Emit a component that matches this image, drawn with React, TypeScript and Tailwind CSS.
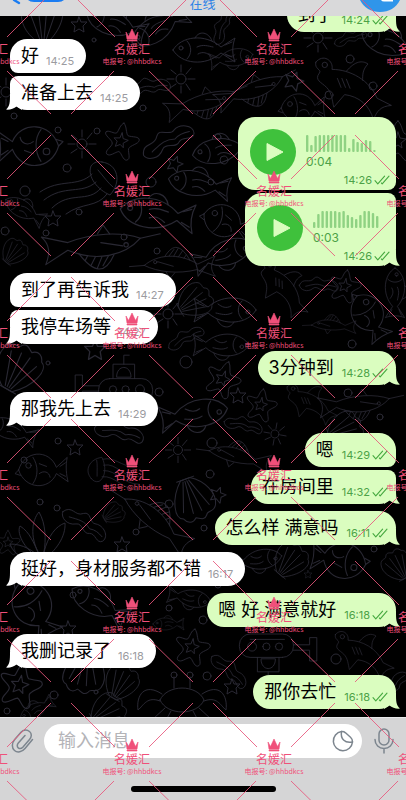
import React from 'react';
import clsx from 'clsx';

interface Message {
  id: number;
  out?: boolean;
  text?: string;
  time: string;
  duration?: string;
  bars?: number[];
  // joined: sits right under the previous bubble of the same sender
  joined?: boolean;
  tail?: boolean;
}

const messages: Message[] = [
  { id: 1, out: true, text: '到了', time: '14:24', tail: true },
  { id: 2, text: '好', time: '14:25' },
  { id: 3, text: '准备上去', time: '14:25', joined: true, tail: true },
  {
    id: 4,
    out: true,
    time: '14:26',
    duration: '0:04',
    bars: [17, 7, 16, 17, 17, 17, 17, 17, 17, 17, 4, 13, 10, 9, 12, 11, 2],
  },
  {
    id: 5,
    out: true,
    time: '14:26',
    duration: '0:03',
    bars: [6, 14, 17, 17, 17, 17, 16, 17, 13, 11, 9, 13, 17, 17, 15, 12],
    joined: true,
    tail: true,
  },
  { id: 6, text: '到了再告诉我', time: '14:27' },
  { id: 7, text: '我停车场等', time: '14:27', joined: true, tail: true },
  { id: 8, out: true, text: '3分钟到', time: '14:28', tail: true },
  { id: 9, text: '那我先上去', time: '14:29', tail: true },
  { id: 10, out: true, text: '嗯', time: '14:29' },
  { id: 11, out: true, text: '在房间里', time: '14:32', joined: true, tail: true },
  { id: 12, out: true, text: '怎么样 满意吗', time: '16:11', tail: true },
  { id: 13, text: '挺好，身材服务都不错', time: '16:17', tail: true },
  { id: 14, out: true, text: '嗯 好 满意就好', time: '16:18', tail: true },
  { id: 15, text: '我删记录了', time: '16:18', tail: true },
  { id: 16, out: true, text: '那你去忙', time: '16:18', tail: true },
];

const Checks = () => (
  <svg viewBox="0 0 16 10" className="h-[10px] w-4" fill="none" stroke="#45a83f" strokeWidth="1.1" strokeLinecap="round" strokeLinejoin="round">
    <path d="M1 5.6 3.8 8.8 10.6 1.2" />
    <path d="M7.4 8 8.2 8.8 15 1.2" />
  </svg>
);

const Tail = ({ out }: { out?: boolean }) => (
  <svg
    viewBox="0 0 16 16"
    className={clsx('absolute bottom-0 h-4 w-4', out ? '-right-1 -scale-x-100 text-[#dafdbf]' : '-left-1 text-white')}
    fill="currentColor"
  >
    <path d="M4 0C4 8 4 12 0 15.6 4 16 8 14.6 10.500 12.500L16 16V0Z" />
  </svg>
);

const Stamp = ({ message }: { message: Message }) => (
  <span className={clsx('flex items-center gap-[2px] text-[11px] leading-3', message.out ? 'text-[#4ca247]' : 'text-[#9b9ba0]')}>
    <time>{message.time}</time>
    {message.out && <Checks />}
  </span>
);

const Waveform = ({ bars }: { bars: number[] }) => (
  <svg width={bars.length * 4.2} height="17" fill="#8fd283">
    {bars.map((h, i) => (
      <rect key={i} x={i * 4.2} y={17 - h} width="2.4" height={h} rx="1" />
    ))}
  </svg>
);

const Voice = ({ message }: { message: Message }) => (
  <div className={clsx('relative flex h-[73px] gap-[10px] pt-3 pr-[6px] pl-3', message.joined ? 'w-[151px]' : 'w-[158px]')}>
    <button aria-label="播放" className="flex size-[46px] shrink-0 items-center justify-center rounded-full bg-[#3fc13c]">
      <svg viewBox="0 0 18 20" className="ml-1 h-5 w-[18px]" fill="#dafdbf">
        <path d="M1 1.500 17 10 1 18.500Z" stroke="#dafdbf" strokeLinejoin="round" />
      </svg>
    </button>
    <div className="flex flex-1 flex-col pt-[6px]">
      <Waveform bars={message.bars ?? []} />
      <span className="mt-1 text-xs leading-3 text-[#4ca247]">{message.duration}</span>
      <div className="mt-[6px] self-end">
        <Stamp message={message} />
      </div>
    </div>
  </div>
);

const Bubble = ({ message }: { message: Message }) => {
  const { out, joined, tail } = message;
  return (
    <li className={clsx('flex', out ? 'justify-end' : 'justify-start', joined ? 'mt-[3px]' : 'mt-[7px]')}>
      <div
        className={clsx(
          'relative rounded-[17px]',
          out ? 'bg-[#dafdbf]' : 'bg-white',
          joined && (out ? 'rounded-tr-lg' : 'rounded-tl-lg'),
          !tail && (out ? 'rounded-br-lg' : 'rounded-bl-lg'),
        )}
      >
        {tail && <Tail out={out} />}
        {message.bars ? (
          <Voice message={message} />
        ) : (
          <div className={clsx('relative flex items-end pl-[11px]', out ? 'gap-2 pr-2' : 'gap-[7px] pr-3')}>
            <p className="text-lg leading-[34px] text-black">{message.text}</p>
            <div className="pb-[6px]">
              <Stamp message={message} />
            </div>
          </div>
        )}
      </div>
    </li>
  );
};

/* Sea creatures used on the wallpaper, each drawn around its own centre */
const shapes: Record<string, React.ReactNode> = {
  fish: (
    <>
      <path d="M-30 0C-22-14 2-17 18-3L32-12C29-4 29 4 32 12L18 3C2 17-22 14-30 0Z" />
      <path d="M-16-9C-11-4-11 4-16 9M-8-12C-4-20 6-18 9-9M-5 4C0 1 4 3 8 6M-6-3C0-6 5-4 10-3M22-5 29-8M22 4 29 7" />
      <circle cx="-22" cy="-2" r="2" />
    </>
  ),
  round: (
    <>
      <path d="M-26 0C-20-22 8-24 16-3L28-14C26-5 27 6 29 13L16 4C8 23-19 22-26 0Z" />
      <path d="M-10-14C-4-5-4 7-10 15M-3 4C2 0 8 2 9 8M-3-7 5-4M20-4 26-8M20 4 26 7M-26 0-30 4-24 6" />
      <circle cx="-15" cy="-5" r="3" />
    </>
  ),
  long: (
    <>
      <path d="M-44 8C-30-8-4-14 22-3L42-16C38-6 38 2 46 9L22 4C0 13-26 14-44 8Z" />
      <path d="M-44 8-62 12M-20-7C-12-25-2-24 12-6M-15-8-10-17M-9-9-5-19M-3-9 1-17M4-8 6-12M-16 12-10 20-5 12M-28 1-8 4" />
      <circle cx="-31" cy="2" r="2" />
    </>
  ),
  star: (
    <>
      <path d="M0-19C4-16 4-8 7-6C11-5 20-8 20-3C20 1 11 4 10 8C10 13 15 19 10 21C6 22 3 14 0 13C-4 14-9 21-13 18C-16 14-8 9-9 5C-10 1-20-2-18-6C-16-9-8-5-6-7C-4-10-4-17 0-19Z" />
      <path d="M0-8 2-2 8-1 3 3 4 8 0 5-5 8-4 2-8-1-2-2Z" />
    </>
  ),
  mini: <path d="M0-7 2-2 8-2 4 2 5 8 0 5-5 8-4 2-8-2-2-2Z" />,
  sun: (
    <>
      <circle r="5" />
      <path d="M0-7V-14M0 7V14M7 0H14M-7 0H-14M5-5 10-11M-5-5-10-9M5 5 9 11M-5 5-11 9" />
    </>
  ),
  weed: <path d="M-22 20C-28 8-14 8-16-2C-17-12-4-6-2-14C1-22 14-26 18-18C20-10 8-12 7-5C7 3-6 0-6 8C-6 18-16 24-22 20ZM-15 14C-10 4-8-2 2-6C4-12 8-15 13-18" />,
  shell: (
    <>
      <path d="M-5 20C-18 12-25-4-20-14C-16-22-10-16-8-21C-4-26 0-21 3-20C8-25 13-22 15-17C24-14 20 6 5 20Z" />
      <path d="M-3 18-14-12M-1 18-5-15M1 18 4-15M3 18 13-11M-9 20H9" />
    </>
  ),
  jelly: (
    <>
      <path d="M18-20C34-18 38 0 26 13C14 8 3-5 7-16C10-20 14-21 18-20Z" />
      <path d="M8-8C-6 6-24-4-44 10M12 0C-2 13-20 2-40 18M17 6C4 22-14 8-32 26M23 12C13 26-2 20-18 32M14-12C20-5 24 1 29 5" />
    </>
  ),
  crab: (
    <>
      <path d="M-22 4C-15-12 15-12 22 4C15 20-15 20-22 4ZM-20-2C-38-14-46 0-44 14C-38 9-35 0-22 5M20-2C38-14 46 0 44 14C38 9 35 0 22 5M-8-8V-19M8-8V-19M-17 12-29 23M-11 15-18 28M17 12 29 23M11 15 18 28" />
      <circle cx="-8" cy="-21" r="3" />
      <circle cx="8" cy="-21" r="3" />
    </>
  ),
  plant: <path d="M0 24C-16 16-26-2-22-10C-12-4-8 8-4 16C-12 0-10-16-3-24C4-12 4 4 2 16C6 0 14-10 23-13C24 0 14 16 0 24ZM0 24C-14 26-28 20-32 8C-20 8-8 14 0 24" />,
  shark: (
    <>
      <path d="M-38-22C-30-32-18-24-20-14C0-14 22-2 30 18L46 26C34 27 30 32 26 42C22 26 10 16-6 14L-18 28C-20 20-20 12-26 6C-32 0-40-2-34-10C-31-14-40-14-38-22ZM-4-12C6-24 14-24 20-20C14-14 14-8 14-2" />
      <path d="M-14-4-10 6M-9-4-5 6M-4-3 0 7" />
      <circle cx="-28" cy="-19" r="3" />
    </>
  ),
  sub: (
    <>
      <rect x="-26" y="-6" width="60" height="26" rx="12" />
      <path d="M-26 2H-44V-10H-52V16H-44V8H-26M-10-6V-22H14V-6M2-22V-32H8M-6-8C-6-22 10-22 10-8ZM-16 14H22" />
      <circle cx="-10" cy="6" r="4" />
      <circle cx="4" cy="6" r="4" />
      <circle cx="20" cy="6" r="5" />
    </>
  ),
};

const doodles: [string, number, number, number?, number?][] = [
  ['shell', 43, 22], ['mini', 79, 24], ['fish', 115, 24, 20], ['fish', 158, 28, -30], ['fish', 203, 50], ['sun', 181, 79],
  ['long', 200, 104, 170, 0.8], ['sun', 6, 92], ['mini', 116, 92, 10], ['weed', 150, 90, 40, 0.8], ['weed', 226, 26, -20, 0.7],
  ['fish', 232, 58, 170, 0.7], ['long', 250, 92, 165, 0.8], ['sun', 318, 38], ['weed', 352, 40, 30, 0.6], ['fish', 390, 44, 20],
  ['shark', 350, 82, 0, 0.9], ['mini', 294, 80, 20, 1.2], ['round', 302, 108, 0, 0.8], ['round', 30, 146, 180, 1.1],
  ['sun', 82, 144], ['star', 121, 140, 10, 0.9], ['weed', 171, 144, 20], ['jelly', 84, 182], ['mini', 175, 163, 20],
  ['fish', 198, 184, 10], ['long', 92, 247, 180, 1.1], ['fish', 156, 214, 8, 1.2], ['mini', 53, 218], ['shell', 14, 253, 40, 0.6],
  ['fish', 24, 210, 30, 0.7], ['fish', 222, 150, -10], ['round', 226, 222, 20, 0.9], ['fish', 224, 254, 160], ['star', 398, 140],
  ['shell', 18, 370, 30, 1.1], ['long', 180, 264, 8, 0.8], ['sub', 122, 384, 0, 0.9], ['mini', 95, 349, 0, 1.3],
  ['sun', 168, 314], ['shell', 194, 302, 60, 0.8], ['weed', 188, 340, 20, 0.7], ['fish', 226, 310, 180], ['fish', 222, 345, 180, 0.9],
  ['shark', 284, 284, 20, 0.7], ['weed', 320, 288, 50, 0.7], ['star', 345, 285, 10, 0.8], ['long', 334, 325, 10, 0.5],
  ['round', 369, 316, 60, 0.9], ['fish', 395, 292, 90, 0.8], ['star', 223, 378, 20, 0.9], ['mini', 238, 395], ['star', 261, 404, 10, 0.8],
  ['shark', 310, 400, 0, 0.6], ['long', 354, 405, 180, 0.8], ['sun', 275, 434, 10, 0.8], ['weed', 244, 428, 60, 0.7],
  ['fish', 195, 414, 170, 1.1], ['long', 240, 456, 20, 0.7], ['shell', 344, 430, 70, 0.8],
  ['round', 42, 470, 0, 0.9], ['mini', 75, 447], ['fish', 12, 430, 20, 0.8], ['weed', 120, 436, 60, 0.9], ['jelly', 110, 476, 220, 0.7],
  ['shell', 192, 498, 160, 1], ['long', 158, 522, 45, 0.9], ['sun', 178, 450, 0, 0.9],
  ['plant', 42, 536], ['weed', 84, 528, 80, 0.9], ['shell', 113, 514, 60, 0.5], ['mini', 122, 544],
  ['mini', 218, 494, 20], ['round', 340, 560, 190, 1], ['fish', 258, 560, 170, 0.8],
  ['shell', 290, 562, 40, 0.8], ['mini', 308, 574, 0, 0.5], ['shell', 398, 566, -30, 0.7], ['star', 8, 542, 0, 0.6],
  ['round', 34, 608, 60, 1.1], ['fish', 98, 604, 30], ['mini', 68, 628], ['fish', 168, 624, 0, 0.5], ['star', 192, 646, 10, 0.9],
  ['fish', 190, 598, 190, 0.7], ['sub', 270, 652, 180, 0.9], ['star', 20, 684, 10, 1.1], ['shell', 84, 670, 190],
  ['shell', 121, 684, 30, 0.8], ['crab', 182, 696], ['weed', 228, 674, 90, 0.8], ['mini', 232, 686], ['shark', 362, 650, 0, 0.7],
  ['shell', 107, 712, 60, 0.8], ['fish', 36, 710, -30, 0.6], ['weed', 394, 690, 0, 0.8],
];

const bubbles: [number, number, number][] = [
  [94, 40, 2], [143, 108, 3], [350, 59, 4], [373, 86, 4], [329, 95, 4], [58, 130, 3], [97, 131, 3], [67, 168, 4], [25, 191, 5],
  [5, 231, 4], [46, 233, 3], [79, 212, 3], [124, 237, 3], [157, 251, 3], [151, 182, 5], [218, 137, 3], [224, 160, 4], [211, 182, 3],
  [186, 362, 6], [48, 363, 2], [159, 392, 4], [212, 443, 5], [352, 344, 4], [380, 417, 3], [348, 393, 4], [58, 441, 3], [24, 460, 3],
  [40, 502, 3], [57, 508, 3], [210, 474, 4], [169, 504, 4], [136, 532, 3], [204, 528, 3], [218, 585, 3], [374, 549, 3], [73, 595, 3],
  [54, 695, 4], [96, 692, 2], [7, 711, 3], [207, 676, 4], [336, 659, 5], [169, 608, 3], [203, 620, 4], [240, 612, 4], [14, 116, 3],
];

const Wallpaper = () => (
  <svg aria-hidden="true" className="absolute inset-0 h-full w-full">
    <defs>
      <pattern id="sea" x="0" y="-16" width="406" height="720" patternUnits="userSpaceOnUse">
        <g fill="none" stroke="#292833" strokeWidth="1" strokeLinecap="round" strokeLinejoin="round">
          {doodles.map(([name, x, y, turn = 0, size = 1], i) => (
            <g key={i} transform={`translate(${x} ${y}) rotate(${turn}) scale(${size})`}>
              {shapes[name]}
            </g>
          ))}
          {bubbles.map(([x, y, r], i) => (
            <circle key={i} cx={x} cy={y} r={r} />
          ))}
        </g>
      </pattern>
    </defs>
    <rect width="100%" height="100%" fill="url(#sea)" />
  </svg>
);

const STEP = 142;

const Watermark = () => (
  <svg className="pointer-events-none absolute inset-0 z-20 h-full w-full font-['Noto_Sans_CJK_SC',sans-serif]">
    {[0, 1, 2, 3, 4, 5].map((row) =>
      [0, 1, 2, 3].map((col) => (
        <g key={`${row}-${col}`} transform={`translate(${col * STEP - 10} ${row * STEP + 54})`}>
          <path d="M-17-17-61-61M17-17 61-61M-18 17-61 60M17 17 61 60" stroke="#e8567b" strokeOpacity="0.85" />
          <path d="M-6-22-3.500-17.500 0-25 3.500-17.500 6-22 5-14.800H-5ZM-5-14H5V-13H-5Z" fill="#f0507a" stroke="#f0507a" strokeWidth="0.6" />
          <g fill="#f0507a" textAnchor="middle">
            <text y="0" fontSize="12">名媛汇</text>
            <text y="10" fontSize="7">电报号: @hhbdkcs</text>
          </g>
        </g>
      )),
    )}
  </svg>
);

const Header = () => (
  <header className="relative z-10 flex h-4 shrink-0 items-end justify-between bg-[#d9d9da] pr-[6px] pb-1 pl-3">
    <button aria-label="返回" className="flex w-[52px] self-start">
      <svg viewBox="0 0 52 6" className="h-[6px] w-[52px]" fill="#1a7cf2">
        <path d="M2 0 7 3" stroke="#1a7cf2" strokeWidth="2.400" strokeLinecap="round" />
        <path d="M16 0H52Q50 2 46 2H22Q18 2 16 0Z" />
      </svg>
    </button>
    <p className="pr-[7px] text-[13px] leading-[18px] text-[#2f83e6]">在线</p>
    <div className="flex w-[52px] justify-end">
      <svg viewBox="0 0 40 12" className="h-3 w-10">
        <path d="M0 0H40C36 8 29 12 20 12S4 8 0 0Z" fill="#2f95ea" />
        <path d="M21 0H33V1.500H24Q22 1.500 21 0Z" fill="#fff" />
      </svg>
    </div>
  </header>
);

const iconClass = 'text-[#7c858e]';

const Composer = () => (
  <footer className="shrink-0 border-t border-[#e8e8ea] bg-[#d5d5d6] pt-[6px] pb-2">
    <form className="flex items-center pr-3 pl-[11px]">
      <button type="button" aria-label="附件" className={clsx('w-[33px]', iconClass)}>
        <svg viewBox="0 0 23 25" className="h-[25px] w-[23px]" fill="none" stroke="currentColor" strokeWidth="1.500" strokeLinecap="round" strokeLinejoin="round">
          <path d="M21.500 10.500 14 19.500C11 23 6.500 24 3.500 21.500S.8 14 3.500 10.800L10 3.200C12.500.5 16 .5 18.500 2.500S20.800 7.800 18.500 10.500L11.800 18.200C10.300 19.800 8.500 19.800 7.200 18.800S6 15.600 7.300 14.100L14 6.500" />
        </svg>
      </button>
      <div className="flex h-[34px] min-w-0 flex-1 items-center rounded-full bg-white pr-2 pl-[14px]">
        <input
          aria-label="输入消息"
          placeholder="输入消息"
          className="min-w-0 flex-1 bg-transparent text-lg leading-6 text-black outline-none placeholder:text-[#b4b4b8]"
        />
        <button type="button" aria-label="贴纸" className={iconClass}>
          <svg viewBox="0 0 22 22" className="size-[22px]" fill="none" stroke="currentColor" strokeWidth="1.500" strokeLinecap="round" strokeLinejoin="round">
            <path d="M9.500 1.600A9.600 9.600 0 1 0 20.500 12C20.600 10 20 8.500 18.500 7.200L13.500 2.800C12.300 1.800 11 1.500 9.500 1.600Z" />
            <path d="M9.500 1.600C8.300 8.500 12.500 13.600 20.500 12" />
          </svg>
        </button>
      </div>
      <button type="button" aria-label="语音" className={clsx('flex w-8 justify-end', iconClass)}>
        <svg viewBox="0 0 20 26" className="h-[26px] w-5" fill="none" stroke="currentColor" strokeWidth="1.500" strokeLinecap="round">
          <rect x="5" y="1" width="10" height="16" rx="5" />
          <path d="M1 11.500C1 17 5 20.500 10 20.500S19 17 19 11.500M10 20.500V25" />
        </svg>
      </button>
    </form>
    <div className="mx-auto mt-7 h-[6px] w-[145px] rounded-full bg-black" />
  </footer>
);

export default function App() {
  return (
    <div className="relative flex h-screen flex-col overflow-hidden bg-black font-['Inter','Noto_Sans_CJK_SC',sans-serif]">
      <Header />
      <main className="relative flex min-h-0 flex-1 flex-col justify-end overflow-hidden">
        <Wallpaper />
        <ul className="relative px-[10px] pb-2">
          {messages.map((message) => (
            <Bubble key={message.id} message={message} />
          ))}
        </ul>
      </main>
      <Composer />
      <Watermark />
    </div>
  );
}
